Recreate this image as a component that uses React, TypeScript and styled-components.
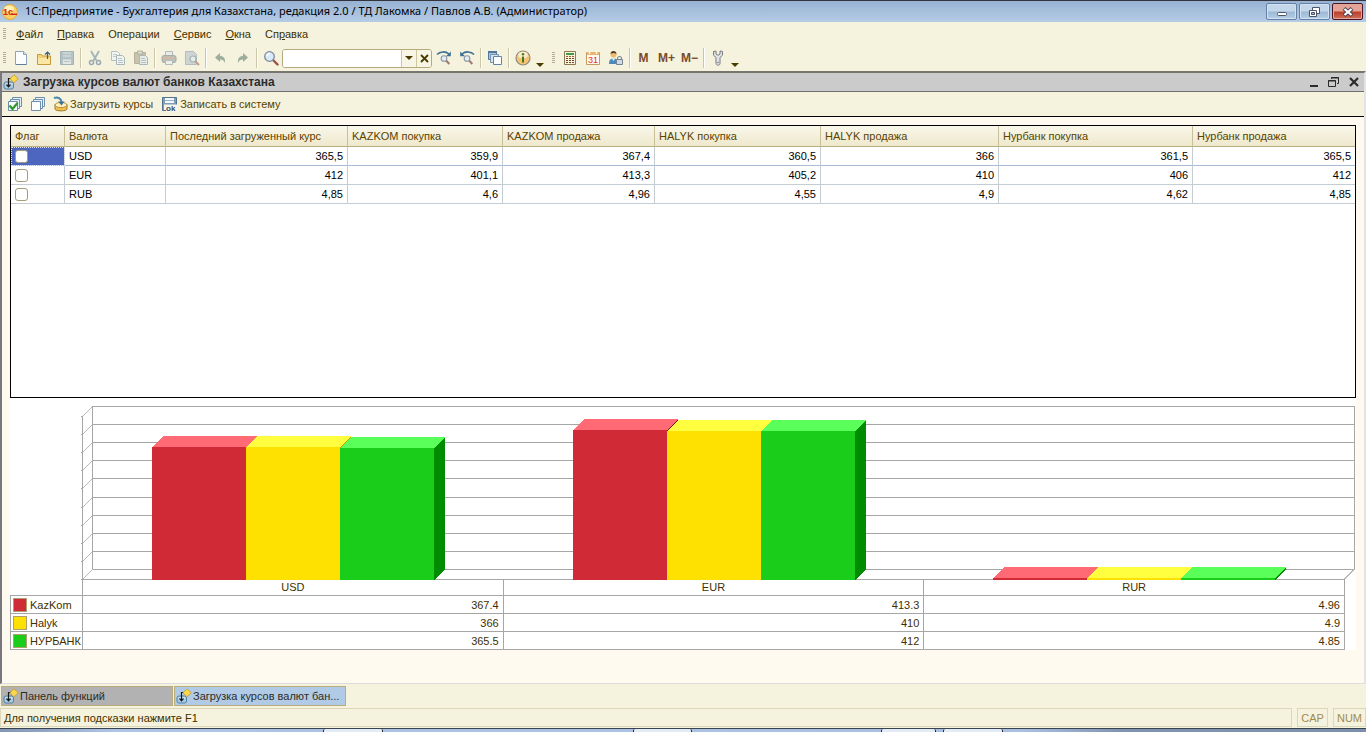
import React, { useLayoutEffect, useRef, useState } from "react";
import styled, { createGlobalStyle } from "styled-components";

const Global = createGlobalStyle`
  * { box-sizing: border-box; }
  body { margin: 0; background: #fff; font: 11px/14px "Liberation Sans", Arial, sans-serif; color: #3f3000; }
  button, input { font: inherit; color: inherit; }
  button { border: 0; padding: 0; background: none; white-space: nowrap; }
`;

const Frame = styled.div`
  min-height: 100vh;
  display: flex;
  flex-direction: column;
  margin-right: 2px;
  background: #f5f2dd;
`;

/* ---------- Title bar ---------- */
const TitleBar = styled.header`
  height: 22px;
  display: flex;
  align-items: center;
  padding: 0 3px 0 2px;
  border-top: 1px solid #33343c;
  background: linear-gradient(#97b2d2, #b5cce6);
  svg { display: block; }
`;
const AppTitle = styled.h1`
  flex: 1;
  margin: 0 0 0 7px;
  padding-bottom: 1px;
  font: 11px/16px "Noto Sans", "Open Sans", sans-serif;
  color: #000;
  white-space: nowrap;
`;
const CaptionButtons = styled.div`
  display: flex;
  gap: 2px;
`;
const CaptionButton = styled.button<{ $close?: boolean }>`
  width: 31px;
  height: 17px;
  display: flex;
  align-items: center;
  justify-content: center;
  border: 1px solid ${(p) => (p.$close ? "#4b1420" : "#6480a3")};
  border-radius: 2px;
  box-shadow: inset 0 0 0 1px ${(p) => (p.$close ? "#e0a79d" : "#d3e2f2")};
  background: ${(p) =>
    p.$close
      ? "linear-gradient(#e5a296 0 48%, #b93d25 52%, #d0705a)"
      : "linear-gradient(#c3d6ea 0 48%, #9bb8d5 52%, #b7cfe8)"};
`;

/* ---------- Menu and toolbars ---------- */
const Bar = styled.div<{ $h: number }>`
  height: ${(p) => p.$h}px;
  display: flex;
  align-items: center;
  padding-bottom: 1px;
  svg { display: block; flex: none; }
`;
const Grip = styled.span`
  width: 3px;
  height: 12px;
  margin: 0 3px;
  background: repeating-linear-gradient(#b3ae92 0 1px, transparent 1px 2px);
`;
const MenuItem = styled.button`
  padding: 0 7px;
  font-size: 11px;
  line-height: 16px;
  color: #3f3000;
`;
const Group = styled.div`
  display: flex;
  align-items: center;
  margin-right: 3px;
`;
const Tool = styled.button<{ $off?: boolean }>`
  width: 23px;
  height: 22px;
  display: flex;
  align-items: center;
  justify-content: center;
  opacity: ${(p) => (p.$off ? 0.55 : 1)};
  font-size: 12px;
  font-weight: bold;
  color: #7a4a2c;
`;
const Separator = styled.span`
  width: 1px;
  height: 20px;
  margin: 0 2px;
  background: #cbc6a8;
  box-shadow: 1px 0 #fff;
`;
const MoreButton = styled.button`
  width: 12px;
  height: 22px;
  display: flex;
  align-items: flex-end;
  justify-content: center;
  padding-bottom: 2px;
`;
const Combo = styled.div`
  width: 150px;
  height: 19px;
  display: flex;
  border: 1px solid #b5aa7c;
  border-radius: 3px;
  background: #fff;
  overflow: hidden;
`;
const ComboInput = styled.input`
  flex: 1;
  min-width: 0;
  border: 0;
  padding: 0 4px;
  outline: 0;
  background: #fff;
`;
const ComboButton = styled.button`
  width: 15px;
  display: flex;
  align-items: center;
  justify-content: center;
  border-left: 1px solid #cfc79f;
  background: #f8f5e4;
`;

/* ---------- Document window ---------- */
const DocWindow = styled.main`
  flex: 1;
  display: flex;
  flex-direction: column;
  border: solid;
  border-width: 2px 2px 1px 2px;
  border-color: #77776f #e4e4e4 #dcdcdc #77777c;
  background: #fffaf0;
`;
const DocTitle = styled.div`
  height: 19px;
  display: flex;
  align-items: center;
  padding: 0 0 0 1px;
  border-bottom: 1px solid #6e6e6e;
  background: #cbcbcb;
  svg { display: block; }
`;
const DocHeading = styled.h2`
  flex: 1;
  margin: 0 0 0 4px;
  font-size: 12px;
  line-height: 16px;
  font-weight: bold;
  color: #2b2b2b;
  white-space: nowrap;
`;
const DocControl = styled.button`
  width: 20px;
  height: 16px;
  display: flex;
  align-items: center;
  justify-content: center;
`;
const DocToolbar = styled(Bar)`
  padding-left: 1px;
  border-bottom: 1px solid #000;
  background: #f5f2dd;
`;
const TextTool = styled.button`
  height: 22px;
  display: flex;
  align-items: center;
  gap: 2px;
  padding: 0 6px 0 3px;
  color: #5a4300;
`;
const Content = styled.div`
  flex: 1;
  display: flex;
  flex-direction: column;
  padding: 8px 8px 33px;
`;

/* ---------- Rates table ---------- */
const GridBox = styled.section`
  flex: 1;
  border: 1px solid #000;
  background: #fff;
`;
const RatesTable = styled.table`
  width: 100%;
  table-layout: fixed;
  border-collapse: separate;
  border-spacing: 0;
`;
const HeadCell = styled.th`
  height: 21px;
  padding: 0 4px;
  overflow: hidden;
  text-align: left;
  font-weight: normal;
  white-space: nowrap;
  color: #5a4300;
  border-right: 1px solid #c9c09a;
  border-bottom: 1px solid #b9ae82;
  background: linear-gradient(#f9f7ea, #eee8cc);
  &:last-child { border-right: 0; }
`;
const Cell = styled.td<{ $num?: boolean; $selected?: boolean; $activeRow?: boolean }>`
  height: 19px;
  padding: 0 4px;
  line-height: 14px;
  text-align: ${(p) => (p.$num ? "right" : "left")};
  color: #000;
  border-right: 1px solid #c4ccd4;
  border-bottom: 1px solid ${(p) => (p.$activeRow ? "#a9bdd9" : "#c4ccd4")};
  background: ${(p) => (p.$selected ? "#4d67c0" : "#fff")};
  outline: ${(p) => (p.$selected ? "1px dotted #dfe5f7" : "none")};
  outline-offset: -1px;
  &:last-child { border-right: 0; }
`;
const Check = styled.input`
  appearance: none;
  display: block;
  width: 13px;
  height: 13px;
  margin: 0;
  border: 1px solid #a59c7a;
  border-radius: 3px;
  background: #fff;
`;

/* ---------- Chart ---------- */
const ChartBox = styled.section`
  background: #fff;
`;
/* The bars stand one pixel over the top border of the legend table */
const Plot = styled.svg`
  display: block;
  position: relative;
  width: 100%;
  height: 181px;
  overflow: visible;
`;
const LegendWrap = styled.div`
  padding-right: 11px;
`;
const LegendTable = styled.table`
  width: 100%;
  table-layout: fixed;
  border-collapse: collapse;
  color: #3f3000;
`;
const CategoryCell = styled.th`
  height: 16px;
  padding: 0 0 2px;
  font-weight: normal;
  line-height: 12px;
  border: 1px solid #a6a6a6;
`;
const SeriesCell = styled.th`
  height: 18px;
  padding: 0;
  overflow: hidden;
  font-weight: normal;
  border: 1px solid #a6a6a6;
`;
const SeriesLabel = styled.span`
  display: flex;
  align-items: center;
  gap: 3px;
  padding-left: 2px;
  line-height: 14px;
`;
const Swatch = styled.i<{ $color: string }>`
  flex: none;
  width: 14px;
  height: 14px;
  border: 1px solid #b0a070;
  background: ${(p) => p.$color};
`;
const ValueCell = styled.td`
  height: 18px;
  padding: 0 4px;
  line-height: 14px;
  text-align: right;
  border: 1px solid #a6a6a6;
`;

/* ---------- Bottom bars ---------- */
const WindowTabs = styled.nav`
  display: flex;
  gap: 1px;
  padding: 2px 1px;
`;
const WindowTab = styled.button<{ $active?: boolean }>`
  width: 172px;
  height: 20px;
  display: flex;
  align-items: center;
  gap: 1px;
  padding-left: 1px;
  border: 1px solid #b8ac7c;
  background: ${(p) => (p.$active ? "#b1cbe6" : "#b2b2b2")};
  color: #2f2c24;
  svg { display: block; flex: none; }
`;
const StatusBar = styled.footer`
  display: flex;
  gap: 5px;
  padding-bottom: 1px;
`;
const StatusCell = styled.div<{ $grow?: boolean }>`
  flex: ${(p) => (p.$grow ? "1" : "none")};
  height: 19px;
  padding: 0 3px;
  border: 1px solid #dcd7b8;
  line-height: 18px;
  color: ${(p) => (p.$grow ? "#3f3000" : "#a08b50")};
`;
const Taskbar = styled.div`
  height: 4px;
  display: flex;
  padding-left: 323px;
  border-top: 1px solid #3c4350;
  background: linear-gradient(90deg, #8296b4 0, #8fa4c3 3%, #adc4e4 8%, #a9c0e2 75%, #8195b2 82%, #7d90ab);
`;
const TaskItem = styled.i<{ $w: number; $gap: number }>`
  width: ${(p) => p.$w}px;
  margin-right: ${(p) => p.$gap}px;
  border: 1px solid #1e2530;
  border-width: 0 1px;
  border-radius: 2px 2px 0 0;
  background: #e3ebf7;
`;

/* ---------- Icons ---------- */
const Svg = ({ children, w = 16, h = 16 }: { children: React.ReactNode; w?: number; h?: number }) => (
  <svg width={w} height={h} viewBox={`0 0 ${w} ${h}`} fill="none" aria-hidden="true">
    {children}
  </svg>
);

const LogoIcon = () => (
  <Svg>
    <circle cx="8" cy="8" r="7.5" fill="#f7cf62" stroke="#e2a93c" />
    <ellipse cx="7" cy="4.5" rx="5" ry="3" fill="#fff0b5" />
    <text x="1" y="11" fontSize="9" fontWeight="bold" fill="#d8201c">1c</text>
    <path d="M9 10.3h6" stroke="#d8201c" strokeWidth="1.4" />
  </Svg>
);
const NewIcon = () => (
  <Svg>
    <path d="M2.5 1.5h8l3 3v10h-11z" fill="#fbfdff" stroke="#8aa3ba" />
    <path d="M10.5 1.5v3h3" fill="#cfe0ef" stroke="#8aa3ba" />
    <path d="M3 14.5h10.5" stroke="#5f7f9d" />
  </Svg>
);
const OpenIcon = () => (
  <Svg>
    <path d="M1.5 4.5h4l1 1.5h8v8.5h-13z" fill="#f3d27a" stroke="#c99a3c" />
    <path d="M2 8h12v6H2z" fill="#fae7a6" />
    <path d="M11.5 9V2M9 4.5 11.5 2 14 4.5" stroke="#3b5f7c" strokeWidth="1.2" />
  </Svg>
);
const SaveIcon = () => (
  <Svg>
    <path d="M1.5 1.5h13v13h-13z" fill="#7f9bb4" stroke="#64809b" />
    <path d="M4 2h8v5H4z" fill="#a9bccf" />
    <path d="M4 9.5h8V14H4z" fill="#d5dfe8" />
    <path d="M4 4.5h8M5 11.5h6" stroke="#7f9bb4" />
  </Svg>
);
const CutIcon = () => (
  <Svg>
    <path d="M4 1l5.5 9.5M12 1 6.5 10.5" stroke="#63809d" strokeWidth="1.8" />
    <circle cx="4.5" cy="12.5" r="2" stroke="#4f6f92" strokeWidth="1.5" />
    <circle cx="11.5" cy="12.5" r="2" stroke="#4f6f92" strokeWidth="1.5" />
  </Svg>
);
const CopyIcon = () => (
  <Svg>
    <path d="M1.5 1.5h6l2 2v7h-8z" fill="#f3f7fb" stroke="#7e97b0" />
    <path d="M3 4.5h4M3 6.5h5" stroke="#8fa8c2" />
    <path d="M6.5 5.5h6l2 2v7h-8z" fill="#f3f7fb" stroke="#6b87a4" />
    <path d="M8 8.5h4M8 10.5h5M8 12.5h5" stroke="#7f9bb9" />
  </Svg>
);
const PasteIcon = () => (
  <Svg>
    <path d="M1.5 2.5h11v11h-11z" fill="#a4a083" stroke="#847d68" />
    <path d="M4.5 1h5v3h-5z" fill="#d0cfc4" stroke="#7e7a6b" />
    <path d="M6.5 5.5h6l2 2v7h-8z" fill="#dce6ef" stroke="#6b87a4" />
    <path d="M8 8.5h4M8 10.5h5M8 12.5h5" stroke="#7f9bb9" />
  </Svg>
);
const PrintIcon = () => (
  <Svg>
    <path d="M4.5 1.5h7v5h-7z" fill="#e1e8ee" stroke="#7c91a6" />
    <rect x="1" y="5.5" width="14" height="7" rx="2" fill="#8d9299" stroke="#6d747f" />
    <path d="M3 8h10" stroke="#c98767" strokeWidth="1.5" />
    <path d="M4.5 10.5h7v4h-7z" fill="#e9edf0" stroke="#7c91a6" />
  </Svg>
);
const PreviewIcon = () => (
  <Svg>
    <path d="M1.5 1.5h8l3 3v10h-11z" fill="#aebdcb" stroke="#7e93a8" />
    <circle cx="9" cy="9" r="3" fill="#dce8f2" stroke="#5f7890" strokeWidth="1.2" />
    <path d="M11.5 11.5 15 15" stroke="#9b5b4e" strokeWidth="2" />
  </Svg>
);
const UndoIcon = ({ flip }: { flip?: boolean }) => (
  <Svg>
    <g transform={flip ? "translate(16 0) scale(-1 1)" : undefined}>
      <path d="M3 7.5 8 3v3c3.500 0 5.500 2 5 7-1-2.500-2.500-3.500-5-3.500V12z" fill="#54796a" />
    </g>
  </Svg>
);
const SearchIcon = () => (
  <Svg>
    <path d="m10 10 4.5 4.5" stroke="#9b4f45" strokeWidth="2.4" strokeLinecap="round" />
    <circle cx="6.5" cy="6.5" r="4.8" fill="#d9eaf8" stroke="#7c8a9c" strokeWidth="1.3" />
    <path d="M4 6a3 3 0 0 1 3-2.5" stroke="#fff" strokeWidth="1.3" />
  </Svg>
);
const FindNextIcon = ({ flip }: { flip?: boolean }) => (
  <Svg>
    <g transform={flip ? "translate(16 0) scale(-1 1)" : undefined}>
      <path d="M1 4.5C4 1.3 9.5 1 13 4" stroke="#3c7193" strokeWidth="1.6" />
      <path d="M14.8 1.5v4.8H10z" fill="#3c7193" />
    </g>
    <circle cx="8" cy="8.5" r="2.8" fill="#e2eef8" stroke="#8c96a2" strokeWidth="1.1" />
    <path d="m10.3 10.8 3 3.2" stroke="#a5776d" strokeWidth="2" />
  </Svg>
);
const WindowsIcon = () => (
  <Svg>
    <path d="M1.5 1.5h8v8h-8z" fill="#a9c3da" stroke="#54789a" />
    <path d="M1 2h9" stroke="#54789a" strokeWidth="2" />
    <path d="M3.5 4.5h8v8h-8z" fill="#d3e3f0" stroke="#7695b1" />
    <path d="M6.5 6.5h8v8h-8z" fill="#fbfdff" stroke="#6285a5" />
  </Svg>
);
const InfoIcon = () => (
  <Svg>
    <circle cx="8" cy="8" r="7" fill="#f6c374" stroke="#8d8a80" strokeWidth="1.2" />
    <ellipse cx="8" cy="5" rx="4.8" ry="3.2" fill="#fdeacb" />
    <circle cx="8" cy="4.3" r="1.2" fill="#3f7a1c" />
    <path d="M8 6.5v6" stroke="#3f7a1c" strokeWidth="2" />
  </Svg>
);
const CalcIcon = () => (
  <Svg>
    <path d="M2.5 1.5h11v13h-11z" fill="#fbf3dc" stroke="#8d7a55" />
    <path d="M4 4h8" stroke="#3f9a45" strokeWidth="2" />
    {[6.5, 8.5, 10.5, 12.5].map((y) => (
      <path key={y} d={`M4 ${y}h8`} stroke={y === 6.5 ? "#a8532a" : "#6b4a2c"} strokeDasharray="2 1" />
    ))}
  </Svg>
);
const CalendarIcon = () => (
  <Svg>
    <path d="M1.5 2.5h13v12h-13z" fill="#fffaf2" stroke="#c79a62" />
    <path d="M2 3.5h12" stroke="#ecb271" strokeWidth="3" />
    <path d="M4.5 1v3M11.5 1v3" stroke="#fff4dd" strokeWidth="1.5" />
    <text x="3" y="13" fontSize="9" fontWeight="normal" fill="#e0351f">31</text>
  </Svg>
);
const UserIcon = () => (
  <Svg>
    <path d="M1 14c0-4 1.500-5.500 4.500-5.500S10 10 10 14z" fill="#4a8dbd" />
    <path d="m4 8.5 1.500 2.500L7 8.5z" fill="#fff" />
    <circle cx="5.5" cy="4.5" r="3" fill="#eebb6c" />
    <path d="M2.5 4c0-4 6-4 6 0-2-1.500-4-1.500-6 0z" fill="#503a25" />
    <path d="M9.5 10V8.5a2 2 0 0 1 4 0V10" stroke="#7b8794" strokeWidth="1.2" />
    <path d="M8.5 9.5h6v5h-6z" fill="#d3dae1" stroke="#758393" />
  </Svg>
);
const WrenchIcon = () => (
  <Svg>
    <path
      d="M3.5 1.5v3.7L6 7.5v6c0 2.200 4 2.200 4 0v-6l2.500-2.300V1.500L10 1v3L8 5.300 6 4V1z"
      fill="#e3e4e4"
      stroke="#777b80"
      strokeLinejoin="round"
    />
    <circle cx="8" cy="12.5" r=".8" fill="#777b80" />
  </Svg>
);
const Arrow = () => (
  <Svg w={8} h={4}>
    <path d="M0 0h8L4 4z" fill="#4a3b00" />
  </Svg>
);
const Cross = () => (
  <Svg w={9} h={9}>
    <path d="m1 1 7 7M8 1 1 8" stroke="#4a3b00" strokeWidth="1.8" />
  </Svg>
);
const FormIcon = () => (
  <Svg>
    <rect x="1" y="8" width="9.5" height="7" rx="2" fill="#a8cbe4" stroke="#55819f" />
    <path d="M2.5 10h7" stroke="#e9f4fb" />
    <path d="M9 4.5H5.5V12M3.5 10.5l2 2.300 2-2.300" stroke="#1b1b1b" strokeWidth="1.2" />
    <path d="M11 .8 15.2 4.8 11 8.8 7 4.8z" fill="#fbd84e" stroke="#c69a25" strokeWidth=".8" />
  </Svg>
);
const StackIcon = ({ checked }: { checked?: boolean }) => (
  <Svg>
    <path d="M5.5 1.5h9v9h-9z" fill="#e6f1fa" stroke="#6d8eac" />
    <path d="M3.5 3.5h9v9h-9z" fill="#e6f1fa" stroke="#6d8eac" />
    <path d="M1.5 5.5h9v9h-9z" fill="#fbfdff" stroke="#6d8eac" />
    {checked && <path d="m2.5 9.5 3 3.5 5-6" stroke="#2f9b2b" strokeWidth="2.4" />}
  </Svg>
);
const LoadIcon = () => (
  <Svg>
    <path d="M3 8.5V13c0 2.500 12 2.500 12 0V8.5" fill="#f0c24c" stroke="#9c7a33" />
    <ellipse cx="9" cy="9" rx="6" ry="2.6" fill="#fdf0bd" stroke="#b58d3c" />
    <path d="M2 2c4-1.500 7 .5 7.500 4" stroke="#4b86ab" strokeWidth="2" />
    <path d="M6 5.5h6.500l-3 4z" fill="#3d7396" />
  </Svg>
);
const SaveOkIcon = () => (
  <Svg>
    <path d="M.5 1.500h14v13H.5z" fill="#7f9db8" stroke="#53738f" />
    <path d="M3 2h9v5H3z" fill="#f3f7fa" />
    <path d="M3 4.5h9" stroke="#9eb3c6" />
    <path d="M2 8.5h14V16H4v-2H2z" fill="#f6f5ea" />
    <text x="4" y="15" fontSize="8" fontWeight="bold" fill="#39505f">ok</text>
  </Svg>
);

/* ---------- Data ---------- */
const columns: { title: string; width?: number }[] = [
  { title: "Флаг", width: 54 },
  { title: "Валюта", width: 101 },
  { title: "Последний загруженный курс", width: 182 },
  { title: "KAZKOM покупка", width: 155 },
  { title: "KAZKOM продажа", width: 152 },
  { title: "HALYK покупка", width: 166 },
  { title: "HALYK продажа", width: 178 },
  { title: "Нурбанк покупка", width: 194 },
  { title: "Нурбанк продажа" },
];
const rates = [
  { code: "USD", values: ["365,5", "359,9", "367,4", "360,5", "366", "361,5", "365,5"] },
  { code: "EUR", values: ["412", "401,1", "413,3", "405,2", "410", "406", "412"] },
  { code: "RUB", values: ["4,85", "4,6", "4,96", "4,55", "4,9", "4,62", "4,85"] },
];
const categories = ["USD", "EUR", "RUR"];
const series = [
  { name: "KazKom", front: "#cf2a35", top: "#ff6a75", side: "#8f0a12", values: [367.4, 413.3, 4.96] },
  { name: "Halyk", front: "#fee100", top: "#ffff40", side: "#bfa000", values: [366, 410, 4.9] },
  { name: "НУРБАНК", front: "#1acd1a", top: "#5aff5a", side: "#008c00", values: [365.5, 412, 4.85] },
];
const menu: [string, string, string][] = [
  ["", "Ф", "айл"],
  ["", "П", "равка"],
  ["Операции", "", ""],
  ["", "С", "ервис"],
  ["", "О", "кна"],
  ["Сп", "р", "авка"],
];

/* 3D bar chart: the front plane is shifted from the back wall by DEPTH on both axes */
const DEPTH = 10;
const BAR_DEPTH = 11;
const LEFT = 72;
const BASE = 181;
const SCALE_HEIGHT = 163;
const MAX = 450;

function BarChart() {
  const ref = useRef<SVGSVGElement>(null);
  const [width, setWidth] = useState(0);
  useLayoutEffect(() => {
    const el = ref.current;
    if (!el) return;
    const measure = () => setWidth(el.getBoundingClientRect().width);
    measure();
    const observer = new ResizeObserver(measure);
    observer.observe(el);
    return () => observer.disconnect();
  }, []);

  const right = width - 12;
  const step = (right - LEFT) / categories.length;
  const bar = Math.ceil((step * 2) / 9);
  const wallRight = right + DEPTH;
  const lines = Array.from({ length: 10 }, (_, i) => Math.round(BASE - DEPTH - (i * SCALE_HEIGHT) / 9));

  return (
    <Plot ref={ref} role="img" aria-label="Курсы валют по банкам" shapeRendering="crispEdges">
      {width > 0 && (
        <>
          <g stroke="#a6a6a6" fill="none">
            {lines.map((y) => (
              <path key={y} d={`M${LEFT + DEPTH} ${y + 0.5}H${wallRight + 1}M${LEFT - 1} ${y + DEPTH + 0.5}h2`} />
            ))}
            {lines.map((y) => (
              <path key={y} stroke="#b8b8b8" d={`M${LEFT + 0.5} ${y + DEPTH + 0.5}l${DEPTH}-${DEPTH}`} />
            ))}
            <path d={`M${LEFT + DEPTH + 0.5} 8V${BASE - DEPTH}M${wallRight + 0.5} 8V${BASE - DEPTH}`} />
            <path d={`M${LEFT + 0.5} 18V${BASE}`} />
            <path stroke="#b8b8b8" d={`M${right + 0.5} ${BASE}l${DEPTH}-${DEPTH}`} />
          </g>
          {categories.map((c, ci) =>
            series.map((s, si) => {
              const x = Math.round(LEFT + step * ci + step / 6) + bar * si;
              const x2 = x + bar;
              const y = Math.round(BASE + 1 - (s.values[ci] / MAX) * SCALE_HEIGHT);
              const d = BAR_DEPTH;
              return (
                <g key={c + s.name}>
                  <path fill={s.side} d={`M${x2} ${y}l${d}-${d}V${BASE + 1 - d}L${x2} ${BASE + 1}z`} />
                  <path fill={s.top} d={`M${x} ${y}l${d}-${d}H${x2 + d}L${x2} ${y}z`} />
                  <path fill={s.front} d={`M${x} ${y}H${x2}V${BASE + 1}H${x}z`} />
                </g>
              );
            }),
          )}
        </>
      )}
    </Plot>
  );
}

export default function App() {
  return (
    <Frame>
      <Global />
      <TitleBar>
        <LogoIcon />
        <AppTitle>1С:Предприятие - Бухгалтерия для Казахстана, редакция 2.0 / ТД Лакомка / Павлов А.В. (Администратор)</AppTitle>
        <CaptionButtons>
          <CaptionButton aria-label="Свернуть">
            <Svg w={12} h={12}><rect x="1.5" y="6.5" width="9" height="3" rx="1" fill="#fff" stroke="#4c5568" /></Svg>
          </CaptionButton>
          <CaptionButton aria-label="Восстановить">
            <Svg w={13} h={12}>
              <path d="M4.5 1.5h7v6h-7z" fill="#fff" stroke="#4c5568" />
              <path d="M1.5 4.5h7v6h-7z" fill="#fff" stroke="#4c5568" />
              <path d="M3.5 6.5h3v2h-3z" fill="#9bb8d5" stroke="#4c5568" />
            </Svg>
          </CaptionButton>
          <CaptionButton $close aria-label="Закрыть">
            <Svg w={12} h={12}>
              <path d="m2 2.5 8 7M10 2.5l-8 7" stroke="#4d4250" strokeWidth="4" />
              <path d="m2.5 3 7 6M9.5 3l-7 6" stroke="#fff" strokeWidth="2.2" />
            </Svg>
          </CaptionButton>
        </CaptionButtons>
      </TitleBar>

      <Bar as="nav" $h={24}>
        <Grip />
        {menu.map(([a, u, b]) => (
          <MenuItem key={a + u}>{a}{u && <u>{u}</u>}{b}</MenuItem>
        ))}
      </Bar>

      <Bar $h={25}>
        <Group>
          <Grip />
          <Tool aria-label="Новый"><NewIcon /></Tool>
          <Tool aria-label="Открыть"><OpenIcon /></Tool>
          <Tool $off aria-label="Сохранить"><SaveIcon /></Tool>
          <Separator />
          <Tool $off aria-label="Вырезать"><CutIcon /></Tool>
          <Tool $off aria-label="Копировать"><CopyIcon /></Tool>
          <Tool $off aria-label="Вставить"><PasteIcon /></Tool>
          <Separator />
          <Tool $off aria-label="Печать"><PrintIcon /></Tool>
          <Tool $off aria-label="Просмотр"><PreviewIcon /></Tool>
          <Separator />
          <Tool $off aria-label="Отменить"><UndoIcon /></Tool>
          <Tool $off aria-label="Вернуть"><UndoIcon flip /></Tool>
          <Separator />
          <Tool aria-label="Найти"><SearchIcon /></Tool>
          <Combo>
            <ComboInput aria-label="Строка поиска" />
            <ComboButton aria-label="История поиска"><Arrow /></ComboButton>
            <ComboButton aria-label="Очистить"><Cross /></ComboButton>
          </Combo>
          <Tool aria-label="Найти далее"><FindNextIcon /></Tool>
          <Tool aria-label="Найти ранее"><FindNextIcon flip /></Tool>
          <Separator />
          <Tool aria-label="Окна"><WindowsIcon /></Tool>
          <Separator />
          <Tool aria-label="Справка"><InfoIcon /></Tool>
          <MoreButton aria-label="Ещё"><Arrow /></MoreButton>
        </Group>
        <Group>
          <Grip />
          <Tool aria-label="Калькулятор"><CalcIcon /></Tool>
          <Tool aria-label="Календарь"><CalendarIcon /></Tool>
          <Tool aria-label="Пользователь"><UserIcon /></Tool>
          <Separator />
          <Tool>M</Tool>
          <Tool>M+</Tool>
          <Tool>M−</Tool>
          <Separator />
          <Tool aria-label="Настройка"><WrenchIcon /></Tool>
          <MoreButton aria-label="Ещё"><Arrow /></MoreButton>
        </Group>
      </Bar>

      <DocWindow>
        <DocTitle>
          <FormIcon />
          <DocHeading>Загрузка курсов валют банков Казахстана</DocHeading>
          <DocControl aria-label="Свернуть окно">
            <Svg w={12} h={12}><path d="M2 10h8" stroke="#2b2b2b" strokeWidth="2" /></Svg>
          </DocControl>
          <DocControl aria-label="Восстановить окно">
            <Svg w={12} h={12}>
              <path d="M3.5 3V1.5h7v6H9M3 2h8M.5 4.5h7v6h-7zM0 5h8" stroke="#2b2b2b" />
            </Svg>
          </DocControl>
          <DocControl aria-label="Закрыть окно">
            <Svg w={12} h={12}><path d="m2 2 8 8M10 2l-8 8" stroke="#2b2b2b" strokeWidth="2.2" /></Svg>
          </DocControl>
        </DocTitle>
        <DocToolbar $h={25}>
          <Tool aria-label="Отметить все"><StackIcon checked /></Tool>
          <Tool aria-label="Снять отметки"><StackIcon /></Tool>
          <TextTool><LoadIcon />Загрузить курсы</TextTool>
          <TextTool><SaveOkIcon />Записать в систему</TextTool>
        </DocToolbar>

        <Content>
          <GridBox>
            <RatesTable>
              <colgroup>
                {columns.map((c) => <col key={c.title} width={c.width} />)}
              </colgroup>
              <thead>
                <tr>{columns.map((c) => <HeadCell key={c.title}>{c.title}</HeadCell>)}</tr>
              </thead>
              <tbody>
                {rates.map((r, i) => (
                  <tr key={r.code}>
                    <Cell $selected={i === 0} $activeRow={i === 0}>
                      <Check type="checkbox" aria-label={r.code} />
                    </Cell>
                    <Cell $activeRow={i === 0}>{r.code}</Cell>
                    {r.values.map((v, k) => <Cell key={k} $num $activeRow={i === 0}>{v}</Cell>)}
                  </tr>
                ))}
              </tbody>
            </RatesTable>
          </GridBox>

          <ChartBox>
            <BarChart />
            <LegendWrap>
              <LegendTable>
                <colgroup><col width={72} /><col /><col /><col /></colgroup>
                <thead>
                  <tr>
                    <td />
                    {categories.map((c) => <CategoryCell key={c}>{c}</CategoryCell>)}
                  </tr>
                </thead>
                <tbody>
                  {series.map((s) => (
                    <tr key={s.name}>
                      <SeriesCell scope="row">
                        <SeriesLabel><Swatch $color={s.front} />{s.name}</SeriesLabel>
                      </SeriesCell>
                      {s.values.map((v, k) => <ValueCell key={k}>{v}</ValueCell>)}
                    </tr>
                  ))}
                </tbody>
              </LegendTable>
            </LegendWrap>
          </ChartBox>
        </Content>
      </DocWindow>

      <WindowTabs>
        <WindowTab><FormIcon />Панель функций</WindowTab>
        <WindowTab $active><FormIcon />Загрузка курсов валют бан...</WindowTab>
      </WindowTabs>
      <StatusBar>
        <StatusCell $grow>Для получения подсказки нажмите F1</StatusCell>
        <StatusCell>CAP</StatusCell>
        <StatusCell>NUM</StatusCell>
      </StatusBar>
      <Taskbar>
        <TaskItem $w={60} $gap={250} />
        <TaskItem $w={59} $gap={189} />
        <TaskItem $w={55} $gap={7} />
        <TaskItem $w={60} $gap={0} />
      </Taskbar>
    </Frame>
  );
}
